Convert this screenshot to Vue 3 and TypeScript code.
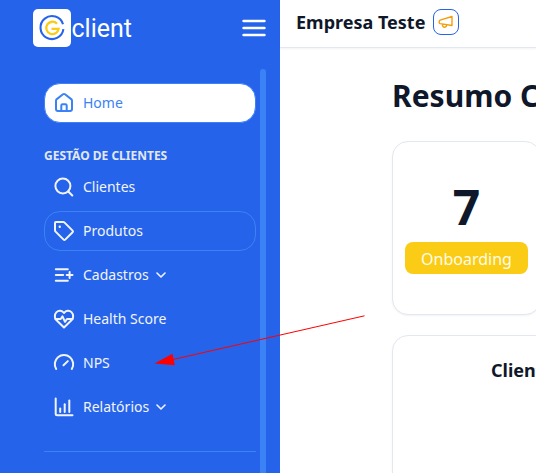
<script setup lang="ts">
interface NavItem {
  label: string
  icon: string[]
  outlined?: boolean
  expandable?: boolean
}

const homeIcon: string[] = [
  'M4 18V9.7q0-1 .8-1.6L11 3.3q1-.7 2 0l6.2 4.8q.8.6.8 1.6V18q0 2-2 2H6q-2 0-2-2Z',
  'M9.3 20v-5.5q0-1.3 1.3-1.3h2.8q1.3 0 1.3 1.3V20',
]

const items: NavItem[] = [
  { label: 'Clientes', icon: ['M18.4 11a7.5 7.5 0 1 1-15 0a7.5 7.5 0 0 1 15 0Z', 'M16.3 16.5l4 4'] },
  {
    label: 'Produtos',
    outlined: true,
    icon: [
      'M3 4q0-1 1-1h7.2q.8 0 1.4.6l8 8q.8.8 0 1.6l-7.4 7.4q-.8.8-1.6 0l-8-8Q3 12 3 11.2Z',
      'M7.6 7.6h.3v.3h-.3Z',
    ],
  },
  { label: 'Cadastros', expandable: true, icon: ['M3.8 6.3h12', 'M3.8 12h7.4', 'M3.8 17.7h12', 'M14.7 12h5.8', 'M17.6 9.1v5.8'] },
  {
    label: 'Health Score',
    icon: [
      'M12 20.5L4.3 13C2.4 11 2.3 7.4 4.5 5.1C6.7 3 10 3.2 12 6C14 3.2 17.3 3 19.5 5.1C21.7 7.4 21.6 11 19.7 13Z',
      'M3.5 12h5.2l1.8-2.7l2.5 5.5l2-2.8h5.5',
    ],
  },
  { label: 'NPS', icon: ['M4.2 18A9.2 9.2 0 1 1 19.8 18', 'M11.5 14.3l4.3-4.2'] },
  { label: 'Relatórios', expandable: true, icon: ['M3.7 3.5v15.2q0 1.5 1.5 1.5h15.3', 'M8.2 17v-3.5', 'M12.7 17V9.3', 'M17.3 17V5.6'] },
]
</script>

<template>
  <div class="app">
    <aside class="sidebar">
      <div class="brand-row">
        <div class="brand">
          <svg class="logo" viewBox="0 0 38 38">
            <rect width="38" height="38" rx="5" fill="#fff" />
            <path d="M30 15.2A11.5 11.5 0 1 0 30.4 20.2" fill="none" stroke="#2563eb" stroke-width="2.1" />
            <path d="M24 14.7A6.2 6.2 0 1 0 25.6 19.8H18.5" fill="none" stroke="#facc15" stroke-width="2.3" />
          </svg>
          <span class="brand-name">client</span>
        </div>
        <svg class="burger" viewBox="0 0 24 18"><path d="M1.6 2h20.8M1.6 9h20.8M1.6 16h20.8" /></svg>
      </div>
      <div class="sidebar-body">
        <nav class="nav">
          <a class="item active">
            <svg class="icon" viewBox="0 0 24 24"><path v-for="d in homeIcon" :key="d" :d="d" /></svg>
            <span>Home</span>
          </a>
          <h2 class="group">GESTÃO DE CLIENTES</h2>
          <div class="list">
            <a v-for="item in items" :key="item.label" class="item" :class="{ outlined: item.outlined }">
              <svg class="icon" viewBox="0 0 24 24"><path v-for="d in item.icon" :key="d" :d="d" /></svg>
              <span>{{ item.label }}</span>
              <svg v-if="item.expandable" class="chevron" viewBox="0 0 10 6"><path d="M1 1l4 4l4-4" /></svg>
            </a>
          </div>
          <hr class="divider" />
        </nav>
        <div class="scrollbar"></div>
      </div>
    </aside>
    <section class="page">
      <header class="topbar">
        <strong>Empresa Teste</strong>
        <button class="announce">
          <svg viewBox="0 0 16 14"><path d="M14 1.5L2.2 5.2q-1 .4-1 1.3v1q0 .9 1 1.1L14 10.5ZM4.5 9v1.5q.5 1.8 2.3 1.7q1.8-.2 1.9-2.3" /></svg>
        </button>
      </header>
      <main class="content">
        <h1>Resumo Clientes</h1>
        <div class="card stat">
          <div class="number">7</div>
          <div class="badge">Onboarding</div>
        </div>
        <div class="card chart"><h3>Clientes</h3></div>
      </main>
    </section>
    <svg class="arrow" viewBox="0 0 536 473">
      <path d="M364.5 315.8L173 359.5" stroke="#f00" stroke-width="1" />
      <path d="M154.500 363.500L172.500 353.700L174.800 365.300Z" fill="#f00" />
    </svg>
  </div>
</template>

<style>
body { overflow: hidden; }
</style>

<style scoped>
* { box-sizing: border-box; }
.app {
  position: relative;
  display: flex;
  width: 536px;
  height: 473px;
  overflow: hidden;
  background: #fff;
  color: #0f172a;
  font-family: "Noto Sans", sans-serif;
}
svg { display: block; }
.sidebar {
  display: flex;
  flex-direction: column;
  flex: 0 0 280px;
  background: #2563eb;
  color: #f1f5f9;
}
.brand-row {
  display: flex;
  align-items: center;
  justify-content: space-between;
  flex: 0 0 69px;
  padding: 0 14px 13px 32.5px;
}
.brand { display: flex; align-items: center; gap: 1px; }
.logo { width: 38px; height: 38px; }
.brand-name { padding-top: 1px; font: 400 25px/30px Roboto, sans-serif; color: #fff; }
.burger { width: 24px; height: 18px; }
.burger path { stroke: #fff; stroke-width: 2.6; stroke-linecap: round; }
.sidebar-body { display: flex; flex: 1; gap: 4px; padding-left: 44px; }
.nav { width: 212px; padding-top: 14px; }
.scrollbar { width: 6px; background: #3b82f6; border-radius: 3px 3px 0 0; }
.item {
  display: flex;
  align-items: center;
  height: 40px;
  padding: 0 7px;
  border: 1px solid transparent;
  border-radius: 16px;
  font-size: 14px;
  line-height: 20px;
}
.item span { margin-left: 7px; }
.active { background: #fff; border-color: #3b82f6; color: #3b82f6; }
.outlined { border-color: #3b82f6; }
.icon { width: 24px; height: 24px; }
.icon path, .chevron path {
  fill: none;
  stroke: currentColor;
  stroke-width: 2;
  stroke-linecap: round;
  stroke-linejoin: round;
}
.chevron { width: 10px; height: 6px; margin-left: 7px; }
.chevron path { stroke-width: 1.6; }
.group {
  margin: 25px 0 0;
  font-size: 12px;
  line-height: 16px;
  font-weight: 700;
  color: #e2e8f0;
}
.list { display: grid; gap: 4px; padding-top: 3px; }
.divider { margin: 24px 0 0; border: 0; border-top: 1px solid #3b82f6; }
.page { flex: 1; min-width: 0; }
.topbar {
  display: flex;
  align-items: center;
  gap: 8px;
  height: 48px;
  padding: 0 16px 3px;
  border-bottom: 1px solid #e2e8f0;
  box-shadow: 0 1px 2px rgb(0 0 0 / 5%);
}
.topbar strong { font-size: 18px; line-height: 28px; font-weight: 700; white-space: nowrap; }
.announce {
  display: grid;
  place-items: center;
  width: 26px;
  height: 26px;
  padding: 0;
  border: 1px solid #2563eb;
  border-radius: 8px;
  background: #fff;
}
.announce svg { width: 16px; height: 14px; }
.announce path { fill: none; stroke: #f59e0b; stroke-width: 1.4; stroke-linejoin: round; }
.content { padding: 30px 0 0 112px; width: 500px; }
h1 { margin: 0; font-size: 30px; line-height: 36px; font-weight: 700; white-space: nowrap; }
.card {
  border: 1px solid #e2e8f0;
  border-radius: 16px;
  background: #fff;
  box-shadow: 0 1px 2px rgb(0 0 0 / 5%);
}
.stat {
  display: flex;
  flex-direction: column;
  align-items: center;
  width: 149px;
  height: 174px;
  margin-top: 27px;
  padding-top: 41px;
}
.number { font-size: 48px; line-height: 48px; font-weight: 700; }
.badge {
  width: 123px;
  height: 32px;
  margin-top: 11px;
  border-radius: 8px;
  background: #facc15;
  color: #fefce8;
  font-size: 16px;
  line-height: 34px;
  text-align: center;
}
.chart { height: 200px; margin-top: 20px; padding: 20px 0 0 98px; }
.chart h3 { margin: 0; font-size: 18px; line-height: 28px; font-weight: 700; }
.arrow { position: absolute; inset: 0; width: 536px; height: 473px; pointer-events: none; }
</style>
